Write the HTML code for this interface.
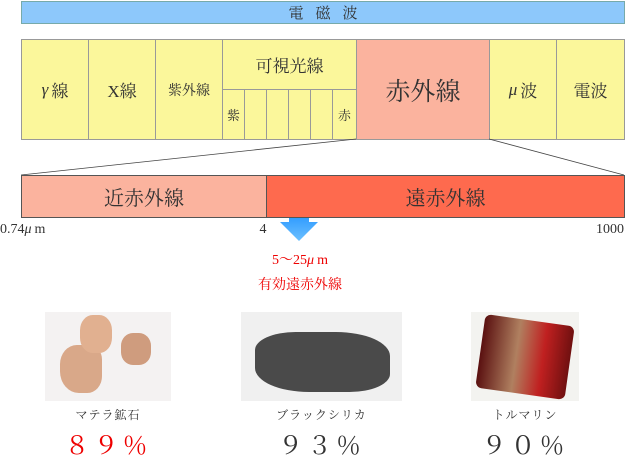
<!DOCTYPE html>
<html><head><meta charset="utf-8"><style>
*{margin:0;padding:0;box-sizing:border-box}
body{width:640px;height:460px;background:#fff;position:relative;overflow:hidden;font-family:"Liberation Serif","Noto Serif CJK JP","Noto Serif CJK SC",serif;color:#333}
.a{position:absolute}
.c{position:absolute;border:1px solid #999;display:flex;align-items:center;justify-content:center;background:#fbf79b}
.t{position:absolute;text-align:center}
i{font-style:italic;margin-right:3px}
</style></head><body>
<div class="c" style="left:21px;top:1px;width:604px;height:23px;background:#8dc8fb;font-size:15px;letter-spacing:12px;padding-left:12px;border-color:#7aa">電磁波</div>
<div class="c" style="left:21px;top:39px;width:68px;height:101px;font-size:17px"><i>γ</i>線</div>
<div class="c" style="left:88px;top:39px;width:68px;height:101px;font-size:17px">X線</div>
<div class="c" style="left:155px;top:39px;width:68px;height:101px;font-size:14px">紫外線</div>
<div class="c" style="left:222px;top:39px;width:135px;height:51px;font-size:17px">可視光線</div>
<div class="c" style="left:222px;top:89px;width:23px;height:51px;font-size:13px">紫</div>
<div class="c" style="left:244px;top:89px;width:23px;height:51px"></div>
<div class="c" style="left:266px;top:89px;width:23px;height:51px"></div>
<div class="c" style="left:288px;top:89px;width:23px;height:51px"></div>
<div class="c" style="left:310px;top:89px;width:23px;height:51px"></div>
<div class="c" style="left:332px;top:89px;width:25px;height:51px;font-size:13px">赤</div>
<div class="c" style="left:356px;top:39px;width:134px;height:101px;background:#fbb39e;font-size:25px">赤外線</div>
<div class="c" style="left:489px;top:39px;width:68px;height:101px;font-size:17px"><i>μ</i>波</div>
<div class="c" style="left:556px;top:39px;width:69px;height:101px;font-size:17px">電波</div>
<svg class="a" style="left:0;top:0" width="640" height="460"><line x1="356" y1="139" x2="21" y2="175" stroke="#444" stroke-width="0.8"/><line x1="489" y1="139" x2="624" y2="175" stroke="#444" stroke-width="0.8"/>
<defs><linearGradient id="g" x1="0" y1="0" x2="0" y2="1"><stop offset="0" stop-color="#1e90ff"/><stop offset="1" stop-color="#6cc0ff"/></linearGradient></defs>
<path d="M289 209H309V222H318L299 241L280 222H289Z" fill="url(#g)"/></svg>
<div class="c" style="left:21px;top:175px;width:246px;height:43px;background:#fbb39e;font-size:20px;border-color:#555">近赤外線</div>
<div class="c" style="left:266px;top:175px;width:359px;height:43px;background:#fe6a4e;font-size:20px;border-color:#555">遠赤外線</div>
<div class="t" style="left:0;top:222px;font-size:14px">0.74<i>μ</i>m</div>
<div class="t" style="left:210px;top:222px;width:106px;font-size:14px">4</div>
<div class="t" style="left:596px;top:222px;font-size:14px">1000</div>
<div class="t" style="left:230px;top:249px;width:140px;font-size:14px;color:#e00">5～25<i>μ</i>m</div>
<div class="t" style="left:230px;top:274px;width:140px;font-size:14px;color:#e00">有効遠赤外線</div>
<div class="a" style="left:45px;top:312px;width:126px;height:89px;background:#f4f2f2"></div>
<div class="a" style="left:60px;top:345px;width:42px;height:48px;background:#d9a889;border-radius:40% 30% 35% 45%"></div>
<div class="a" style="left:80px;top:315px;width:32px;height:38px;background:#e1b090;border-radius:40%"></div>
<div class="a" style="left:121px;top:333px;width:30px;height:32px;background:#cf9c7e;border-radius:40%"></div>
<div class="a" style="left:241px;top:312px;width:161px;height:89px;background:#f0f0f0"></div>
<div class="a" style="left:255px;top:332px;width:135px;height:60px;background:#4a4a4a;border-radius:30% 40% 30% 40%"></div>
<div class="a" style="left:471px;top:312px;width:108px;height:89px;background:#f3f3f0"></div>
<div class="a" style="left:480px;top:320px;width:90px;height:74px;background:linear-gradient(90deg,#5a1010,#b08060 40%,#c02020 70%,#701010);border-radius:6px;transform:rotate(8deg)"></div>
<div class="t" style="left:45px;top:406px;width:126px;font-size:12px;letter-spacing:1px">マテラ鉱石</div>
<div class="t" style="left:241px;top:406px;width:161px;font-size:12px;letter-spacing:1px">ブラックシリカ</div>
<div class="t" style="left:471px;top:406px;width:108px;font-size:12px;letter-spacing:1px">トルマリン</div>
<div class="t" style="left:45px;top:426px;width:126px;font-size:25px;color:#e00;letter-spacing:4px">８９％</div>
<div class="t" style="left:241px;top:426px;width:161px;font-size:25px;letter-spacing:4px">９３％</div>
<div class="t" style="left:471px;top:426px;width:108px;font-size:25px;letter-spacing:4px">９０％</div>
</body></html>
